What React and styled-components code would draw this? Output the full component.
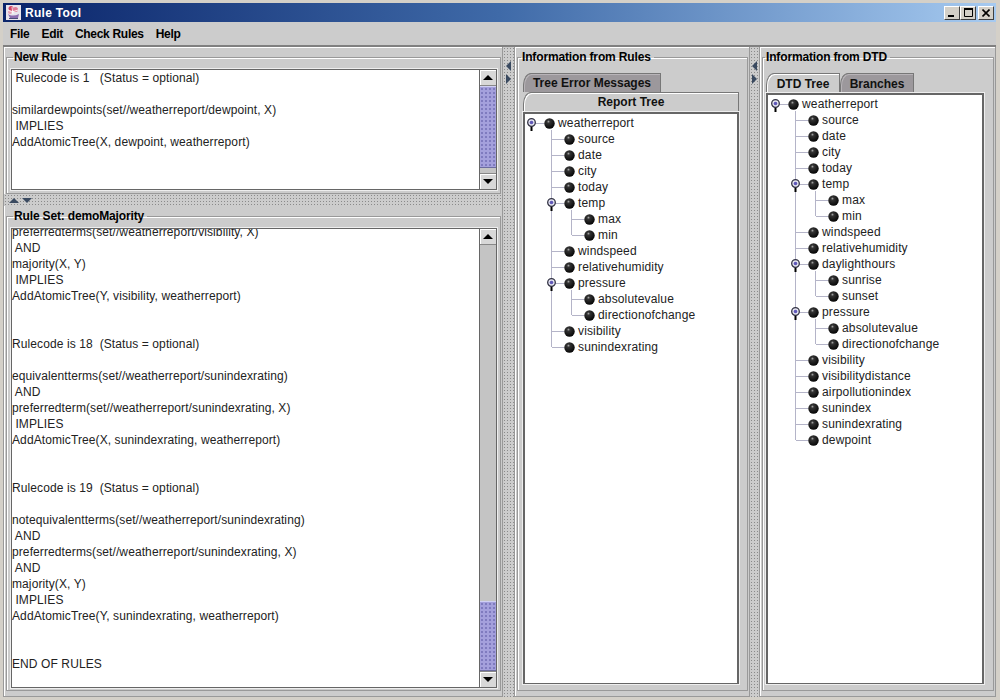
import styled, { createGlobalStyle } from "styled-components"

const GlobalStyle = createGlobalStyle`
  html, body { margin: 0; padding: 0; background: #d4d0c8; }
  * { box-sizing: border-box; }
`

const Win = styled.div`
  width: 1000px;
  height: 700px;
  display: flex;
  flex-direction: column;
  overflow: hidden;
  background: #cccccc;
  border: 3px solid #d4d0c8;
  border-right-width: 4px;
  box-shadow: inset 1px 1px 0 #ffffff;
  font-family: "Liberation Sans", Arial, sans-serif;
  font-size: 12px;
  color: #000;
`

const TitleBar = styled.div`
  height: 19px;
  flex: none;
  display: flex;
  align-items: center;
  padding: 0 2px 0 3px;
  gap: 4px;
  background: linear-gradient(90deg, #0a246a 0%, #3f6aa8 50%, #a6caf0 100%);
`

const TitleText = styled.span`
  flex: 1;
  color: #fff;
  font-weight: bold;
  font-size: 12px;
  letter-spacing: 0.3px;
`

const WinButtons = styled.div`
  display: flex;
`

const WinButton = styled.button`
  width: 16px;
  height: 14px;
  padding: 0;
  margin-left: ${p => (p.$gap ? "2px" : "0")};
  background: #d4d0c8;
  border: 1px solid;
  border-color: #fff #404040 #404040 #fff;
  display: flex;
  align-items: center;
  justify-content: center;
`

const MenuBar = styled.div`
  height: 25px;
  flex: none;
  display: flex;
  align-items: center;
  padding: 1px 0 0 7px;
  gap: 12px;
  background: #cccccc;
  border-bottom: 2px solid #808080;
  font-weight: bold;
  letter-spacing: -0.3px;
`

const Workspace = styled.div`
  flex: 1;
  min-height: 0;
  display: flex;
`

const Pane = styled.div`
  flex: ${p => (p.$grow ? "1" : "none")};
  width: ${p => p.$width || "auto"};
  min-width: 0;
  display: flex;
  flex-direction: column;
  border: 1px solid #999;
  border-top: none;
  box-shadow: inset 1px 1px 0 #fff;
`

const Titled = styled.fieldset`
  flex: ${p => (p.$grow ? "1" : "none")};
  height: ${p => p.$height || "auto"};
  min-height: 0;
  min-width: 0;
  margin: 3px 1px ${p => p.$bottom || "5px"} 2px;
  padding: ${p => p.$padding};
  border: 1px solid #999;
  box-shadow: inset 1px 1px 0 #fff;
  display: flex;
  flex-direction: column;
`

const Legend = styled.legend`
  font-weight: bold;
  font-size: 12px;
  line-height: 14px;
  letter-spacing: -0.15px;
  padding: 0 3px 0 1px;
  margin-left: ${p => p.$left || "0"};
`

const TextBox = styled.div`
  flex: 1;
  min-height: 0;
  display: flex;
  background: #fff;
  border: 1px solid #666;
  outline: 1px solid #eee;
`

const TextView = styled.pre`
  flex: 1;
  min-width: 0;
  margin: 0;
  overflow: hidden;
  font-family: "Liberation Sans", Arial, sans-serif;
  font-size: 12px;
  line-height: 16px;
  letter-spacing: 0.1px;
  color: #222;
`

const ClippedText = styled.div`
  margin-top: ${p => p.$offset || "0"};
`

const ScrollBar = styled.div`
  width: 17px;
  flex: none;
  display: flex;
  flex-direction: column;
  background: #cccccc;
  border-left: 1px solid #666;
`

const ScrollArrow = styled.div`
  height: 16px;
  flex: none;
  display: flex;
  align-items: center;
  justify-content: center;
  background: #d8d8d8;
  box-shadow: inset 1px 1px 0 #fff;
  border-bottom: ${p => (p.$up ? "1px solid #888" : "none")};
  border-top: ${p => (p.$up ? "none" : "1px solid #888")};

  &::after {
    content: "";
    border-left: 5px solid transparent;
    border-right: 5px solid transparent;
    border-bottom: ${p => (p.$up ? "5px solid #000" : "none")};
    border-top: ${p => (p.$up ? "none" : "5px solid #000")};
  }
`

const ScrollTrack = styled.div`
  flex: 1;
  min-height: 0;
  display: flex;
  flex-direction: column;
  justify-content: ${p => (p.$end ? "flex-end" : "flex-start")};
  background: #c4c4c4;
`

const ScrollThumb = styled.div`
  height: ${p => p.$size}px;
  flex: none;
  background-color: #a4a0dc;
  background-image: radial-gradient(#7f7bbf 0.8px, transparent 1px);
  background-size: 4px 4px;
  border-top: 1px solid #d0d0f4;
  border-bottom: 1px solid #6c6ca0;
`

const HSplit = styled.div`
  height: 12px;
  flex: none;
  display: flex;
  align-items: center;
  gap: 3px;
  padding-left: 5px;
  background-color: #cccccc;
  background-image: radial-gradient(#8a8a8a 0.7px, transparent 1px);
  background-size: 3px 3px;
`

const Tri = styled.span`
  width: 0;
  height: 0;
  border-left: 5px solid transparent;
  border-right: 5px solid transparent;
  border-bottom: ${p => (p.$up ? "5px solid #3a4a60" : "none")};
  border-top: ${p => (p.$up ? "none" : "5px solid #3a4a60")};
`

const VSplit = styled.div`
  width: ${p => p.$width};
  flex: none;
  display: flex;
  flex-direction: column;
  align-items: center;
  gap: 3px;
  padding-top: 14px;
  background-color: #cccccc;
  background-image: radial-gradient(#8a8a8a 0.7px, transparent 1px);
  background-size: 3px 3px;
`

const VTri = styled.span`
  width: 0;
  height: 0;
  border-top: 5px solid transparent;
  border-bottom: 5px solid transparent;
  border-right: ${p => (p.$left ? "5px solid #3a4a60" : "none")};
  border-left: ${p => (p.$left ? "none" : "5px solid #3a4a60")};
`

const TabRow = styled.div`
  display: flex;
  flex: none;
  height: ${p => p.$height};
`

const Tab = styled.div`
  flex: ${p => (p.$wide ? "1" : "none")};
  width: ${p => p.$width || "auto"};
  display: flex;
  align-items: center;
  justify-content: center;
  padding-bottom: ${p => (p.$wide ? "2px" : "0")};
  font-weight: bold;
  font-size: 12px;
  color: #111;
  background: ${p => (p.$active ? "#cccccc" : "#9c989c")};
  border: 1px solid #777;
  border-bottom: none;
  border-top-left-radius: 8px 12px;
  box-shadow: inset 1px 1px 0 ${p => (p.$active ? "#fff" : "#b8b4b8")};
`

const TreeBox = styled.div`
  flex: 1;
  min-height: 0;
  background: #fff;
  border: 2px solid #666;
  border-bottom-width: 1px;
  outline: 1px solid #eee;
  padding: 1px 0 0 ${p => p.$left};
  overflow: hidden;
`

const NodeList = styled.ul`
  list-style: none;
  margin: 0;
  padding: 0;
`

const SubList = styled(NodeList)`
  margin-left: 20px;
`

const Node = styled.li`
  position: relative;

  &::before {
    content: "";
    position: absolute;
    left: 0;
    top: -1px;
    width: 1px;
    height: ${p => (p.$last ? "9px" : "calc(100% + 1px)")};
    background: ${p => (p.$line ? "#b4b4c8" : "transparent")};
  }
`

const Row = styled.div`
  position: relative;
  height: 16px;
  display: flex;
  align-items: center;
  gap: 3px;
  padding-left: 13px;
  color: #222;
  letter-spacing: 0.15px;

  &::before {
    content: "";
    position: absolute;
    left: 1px;
    top: 8px;
    width: 12px;
    height: 1px;
    background: #b4b4c8;
  }
`

const ToggleSlot = styled.span`
  position: absolute;
  z-index: 1;
  left: -5px;
  top: 3px;
  line-height: 0;
`

const Logo = () => (
  <svg width="15" height="15" viewBox="0 0 15 15">
    <rect width="15" height="15" fill="#e8e4ec" />
    <circle cx="5" cy="3.5" r="2.5" fill="#d04868" />
    <circle cx="9.5" cy="4.5" r="2.5" fill="#e07c98" />
    <circle cx="4" cy="7" r="2" fill="#e8a0b4" />
    <path d="M2 9c3 2 7 2 11 0l-1 4H4z" fill="#8c6cb0" />
    <path d="M2 5l4 2 6-2M6 2l1 7" stroke="#fff" strokeWidth="0.8" fill="none" />
    <rect x="3" y="13" width="9" height="1" fill="#4a4a78" />
  </svg>
)

const Ball = () => (
  <svg width="11" height="11" viewBox="0 0 11 11">
    <defs>
      <radialGradient id="ballFill" cx="0.4" cy="0.32" r="0.75">
        <stop offset="0" stopColor="#a8a8a8" />
        <stop offset="0.2" stopColor="#333" />
        <stop offset="1" stopColor="#000" />
      </radialGradient>
    </defs>
    <circle cx="5.5" cy="5.5" r="5.2" fill="url(#ballFill)" />
  </svg>
)

const Toggle = () => (
  <svg width="11" height="13" viewBox="0 0 11 13">
    <rect x="4.5" y="8" width="2" height="5" fill="#000" />
    <circle cx="5.5" cy="4.5" r="3.8" fill="#e4e4f0" stroke="#334" strokeWidth="1.3" />
    <circle cx="5.5" cy="4.5" r="1.8" fill="#6058b8" />
  </svg>
)

const TreeNode = ({ node, root, last }) => (
  <Node $line={!root} $last={last}>
    <Row>
      {node.children && (
        <ToggleSlot>
          <Toggle />
        </ToggleSlot>
      )}
      <Ball />
      <span>{node.name}</span>
    </Row>
    {node.children && (
      <SubList>
        {node.children.map((c, i) => (
          <TreeNode key={c.name} node={c} last={i === node.children.length - 1} />
        ))}
      </SubList>
    )}
  </Node>
)

const leaf = name => ({ name })

const reportTree = {
  name: "weatherreport",
  children: [
    leaf("source"),
    leaf("date"),
    leaf("city"),
    leaf("today"),
    { name: "temp", children: [leaf("max"), leaf("min")] },
    leaf("windspeed"),
    leaf("relativehumidity"),
    { name: "pressure", children: [leaf("absolutevalue"), leaf("directionofchange")] },
    leaf("visibility"),
    leaf("sunindexrating"),
  ],
}

const dtdTree = {
  name: "weatherreport",
  children: [
    leaf("source"),
    leaf("date"),
    leaf("city"),
    leaf("today"),
    { name: "temp", children: [leaf("max"), leaf("min")] },
    leaf("windspeed"),
    leaf("relativehumidity"),
    { name: "daylighthours", children: [leaf("sunrise"), leaf("sunset")] },
    { name: "pressure", children: [leaf("absolutevalue"), leaf("directionofchange")] },
    leaf("visibility"),
    leaf("visibilitydistance"),
    leaf("airpollutionindex"),
    leaf("sunindex"),
    leaf("sunindexrating"),
    leaf("dewpoint"),
  ],
}

const newRule = ` Rulecode is 1   (Status = optional)

similardewpoints(set//weatherreport/dewpoint, X)
 IMPLIES
AddAtomicTree(X, dewpoint, weatherreport)`

const ruleSet = `preferredterms(set//weatherreport/visibility, X)
 AND
majority(X, Y)
 IMPLIES
AddAtomicTree(Y, visibility, weatherreport)


Rulecode is 18  (Status = optional)

equivalentterms(set//weatherreport/sunindexrating)
 AND
preferredterm(set//weatherreport/sunindexrating, X)
 IMPLIES
AddAtomicTree(X, sunindexrating, weatherreport)


Rulecode is 19  (Status = optional)

notequivalentterms(set//weatherreport/sunindexrating)
 AND
preferredterms(set//weatherreport/sunindexrating, X)
 AND
majority(X, Y)
 IMPLIES
AddAtomicTree(Y, sunindexrating, weatherreport)


END OF RULES`

export default function App() {
  return (
    <>
      <GlobalStyle />
      <Win>
        <TitleBar>
          <Logo />
          <TitleText>Rule Tool</TitleText>
          <WinButtons>
            <WinButton>
              <svg width="8" height="8" viewBox="0 0 8 8"><rect x="0" y="6" width="6" height="2" fill="#000" /></svg>
            </WinButton>
            <WinButton>
              <svg width="9" height="9" viewBox="0 0 9 9"><path d="M0.5 1.5h8v7h-8z" fill="none" stroke="#000" /><rect x="0" y="0" width="9" height="2" fill="#000" /></svg>
            </WinButton>
            <WinButton $gap>
              <svg width="8" height="8" viewBox="0 0 8 8"><path d="M0.5 0.5l7 7M7.5 0.5l-7 7" stroke="#000" strokeWidth="1.6" /></svg>
            </WinButton>
          </WinButtons>
        </TitleBar>
        <MenuBar>
          <span>File</span>
          <span>Edit</span>
          <span>Check Rules</span>
          <span>Help</span>
        </MenuBar>
        <Workspace>
          <Pane $width="500px">
            <Titled $height="144px" $bottom="0" $padding="5px 3px 3px 4px">
              <Legend $left="2px">New Rule</Legend>
              <TextBox>
                <TextView>{newRule}</TextView>
                <ScrollBar>
                  <ScrollArrow $up />
                  <ScrollTrack>
                    <ScrollThumb $size={82} />
                  </ScrollTrack>
                  <ScrollArrow />
                </ScrollBar>
              </TextBox>
            </Titled>
            <HSplit>
              <Tri $up />
              <Tri />
            </HSplit>
            <Titled $grow $padding="5px 3px 2px 4px">
              <Legend $left="2px">Rule Set: demoMajority</Legend>
              <TextBox>
                <TextView>
                  <ClippedText $offset="-5px">{ruleSet}</ClippedText>
                </TextView>
                <ScrollBar>
                  <ScrollArrow $up />
                  <ScrollTrack $end>
                    <ScrollThumb $size={70} />
                  </ScrollTrack>
                  <ScrollArrow />
                </ScrollBar>
              </TextBox>
            </Titled>
          </Pane>
          <VSplit $width="11px">
            <VTri $left />
            <VTri />
          </VSplit>
          <Pane $width="236px">
            <Titled $grow $padding="9px 8px 6px 5px">
              <Legend $left="-2px">Information from Rules</Legend>
              <TabRow $height="19px">
                <Tab $width="138px">Tree Error Messages</Tab>
              </TabRow>
              <TabRow $height="20px">
                <Tab $wide $active>Report Tree</Tab>
              </TabRow>
              <TreeBox $left="6px">
                <NodeList>
                  <TreeNode node={reportTree} root />
                </NodeList>
              </TreeBox>
            </Titled>
          </Pane>
          <VSplit $width="9px">
            <VTri $left />
            <VTri />
          </VSplit>
          <Pane $grow>
            <Titled $grow $padding="9px 9px 6px 3px">
              <Legend $left="-1px">Information from DTD</Legend>
              <TabRow $height="20px">
                <Tab $width="74px" $active>DTD Tree</Tab>
                <Tab $width="74px">Branches</Tab>
              </TabRow>
              <TreeBox $left="7px">
                <NodeList>
                  <TreeNode node={dtdTree} root />
                </NodeList>
              </TreeBox>
            </Titled>
          </Pane>
        </Workspace>
      </Win>
    </>
  )
}
